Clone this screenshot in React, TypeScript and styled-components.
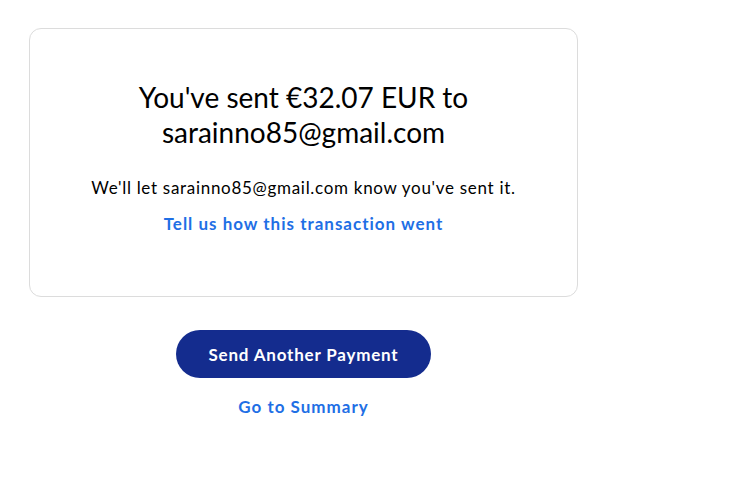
import React, { FC } from "react";
import styled, { createGlobalStyle } from "styled-components";

const GlobalStyle = createGlobalStyle`
  html, body {
    margin: 0;
    padding: 0;
    background: #ffffff;
    font-family: Lato, "Open Sans", sans-serif;
    color: #000000;
  }
`;

const StyledPage = styled.div`
  display: flex;
  flex-direction: column;
  align-items: center;
  width: 549px;
  padding: 28px 0 0 29px;
`;

const StyledCard = styled.div`
  display: flex;
  flex-direction: column;
  align-items: center;
  box-sizing: border-box;
  width: 549px;
  height: 269px;
  padding: 51px 20px 0;
  border: 1px solid #dcdcdc;
  border-radius: 12px;
`;

const StyledTitle = styled.h1`
  margin: 0;
  font-size: 28px;
  font-weight: 400;
  line-height: 35px;
  text-align: center;
`;

const StyledNote = styled.p`
  margin: 26px 0 0;
  font-size: 17px;
  letter-spacing: 0.7px;
  line-height: 24px;
  text-align: center;
`;

const StyledLink = styled.a<{ $top: number }>`
  margin-top: ${(p) => p.$top}px;
  font-size: 17px;
  font-weight: 700;
  letter-spacing: 1px;
  line-height: 24px;
  color: #1f6fe5;
  text-decoration: none;
  cursor: pointer;
`;

const StyledButton = styled.button`
  margin-top: 33px;
  width: 255px;
  height: 48px;
  border: none;
  border-radius: 24px;
  background: #142c8e;
  color: #ffffff;
  font-family: inherit;
  font-size: 17px;
  font-weight: 700;
  letter-spacing: 0.8px;
  cursor: pointer;
`;

const App: FC = () => (
    <>
        <GlobalStyle />
        <StyledPage>
            <StyledCard>
                <StyledTitle>
                    You've sent €32.07 EUR to
                    <br />
                    sarainno85@gmail.com
                </StyledTitle>
                <StyledNote>We'll let sarainno85@gmail.com know you've sent it.</StyledNote>
                <StyledLink $top={12}>Tell us how this transaction went</StyledLink>
            </StyledCard>
            <StyledButton>Send Another Payment</StyledButton>
            <StyledLink $top={17}>Go to Summary</StyledLink>
        </StyledPage>
    </>
);

export default App;
